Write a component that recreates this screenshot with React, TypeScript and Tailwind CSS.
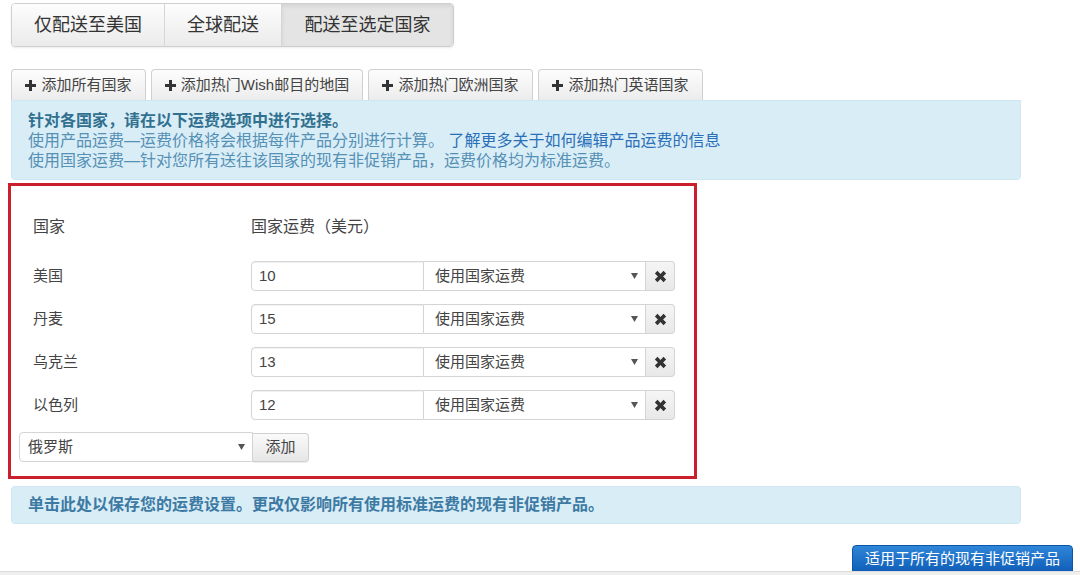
import React from 'react';

const font = { fontFamily: '"Liberation Sans", "Noto Sans CJK SC", sans-serif' };

function PlusIcon() {
  return (
    <svg width="11" height="11" viewBox="0 0 11 11" className="shrink-0">
      <path d="M4 0h3v4h4v3H7v4H4V7H0V4h4z" fill="#333" />
    </svg>
  );
}

function CrossIcon() {
  return (
    <svg width="13" height="13" viewBox="0 0 12 12">
      <path
        d="M0.8 3.2 3.2 0.8 6 3.6l2.8-2.8 2.4 2.4L8.4 6l2.8 2.8-2.4 2.4L6 8.4l-2.8 2.8-2.4-2.4L3.6 6z"
        fill="#333"
      />
    </svg>
  );
}

function Caret() {
  return (
    <svg width="7" height="6" viewBox="0 0 7 6">
      <path d="M0 0h7L3.5 6z" fill="#555" />
    </svg>
  );
}

const tabs = [
  { label: '仅配送至美国', w: 'w-[152px]', active: false },
  { label: '全球配送', w: 'w-[117px]', active: false },
  { label: '配送至选定国家', w: 'w-[172px]', active: true },
];

const addButtons = [
  { label: '添加所有国家', w: 'w-[135px]' },
  { label: '添加热门Wish邮目的地国', w: 'w-[212px]' },
  { label: '添加热门欧洲国家', w: 'w-[165px]' },
  { label: '添加热门英语国家', w: 'w-[165px]' },
];

const rows = [
  { country: '美国', price: '10' },
  { country: '丹麦', price: '15' },
  { country: '乌克兰', price: '13' },
  { country: '以色列', price: '12' },
];

export default function App() {
  return (
    <div style={font} className="relative h-[575px] w-full overflow-hidden bg-white text-[#333]">
      <div className="pl-[11px]">
        {/* shipping mode tabs */}
        <div className="mt-[3px] flex h-[44px] w-fit overflow-hidden rounded-[4px] border border-[#cfcfcf] shadow-[0_1px_2px_rgba(0,0,0,0.08)]">
          {tabs.map((t, i) => (
            <div
              key={t.label}
              className={`${t.w} flex items-center justify-center text-[18px] ${
                i > 0 ? 'border-l border-[#d6d6d6]' : ''
              } ${
                t.active
                  ? 'bg-[#e4e4e4] shadow-[inset_0_2px_4px_rgba(0,0,0,0.08)]'
                  : 'bg-gradient-to-b from-[#fdfdfd] to-[#ebebeb]'
              }`}
            >
              {t.label}
            </div>
          ))}
        </div>

        {/* add country buttons */}
        <div className="mt-[22px] flex h-[31px] gap-[5px]">
          {addButtons.map((b) => (
            <div
              key={b.label}
              className={`${b.w} flex items-center justify-center gap-[5px] rounded-t-[4px] border border-b-0 border-[#d0d0d0] bg-gradient-to-b from-[#fdfdfd] to-[#ececec] text-[15px] text-[#444]`}
            >
              <PlusIcon />
              <span>{b.label}</span>
            </div>
          ))}
        </div>

        {/* info box */}
        <div className="h-[80px] w-[1010px] rounded-b-[4px] border border-[#cfe6f3] bg-[#d9edf7] pl-[16px] pt-[10px] text-[16px] leading-[20px] text-[#5590b5]">
          <div className="font-bold text-[#31708f]">针对各国家，请在以下运费选项中进行选择。</div>
          <div>
            使用产品运费—运费价格将会根据每件产品分别进行计算。{' '}
            <span className="text-[#2a6fb8]">了解更多关于如何编辑产品运费的信息</span>
          </div>
          <div>使用国家运费—针对您所有送往该国家的现有非促销产品，运费价格均为标准运费。</div>
        </div>

        {/* country table */}
        <div className="-ml-[3px] mt-[3px] h-[296px] w-[689px] border-[3px] border-[#cc1f2d] bg-white px-[8px] pt-[29px] text-[#444]">
          <div className="flex h-[24px] items-center text-[16px]">
            <div className="w-[232px] pl-[14px]">国家</div>
            <div>国家运费（美元）</div>
          </div>
          <div className="mt-[22px] flex flex-col gap-[13px]">
            {rows.map((r) => (
              <div key={r.country} className="flex h-[30px] items-center text-[15px]">
                <div className="w-[232px] pl-[14px]">{r.country}</div>
                <div className="flex h-[30px] w-[173px] items-center rounded-l-[4px] border border-[#d4d4d4] pl-[7px] shadow-[inset_0_1px_1px_rgba(0,0,0,0.06)]">
                  {r.price}
                </div>
                <div className="flex h-[30px] w-[222px] items-center justify-between border-y border-r border-[#d4d4d4] pl-[11px] pr-[7px]">
                  <span>使用国家运费</span>
                  <Caret />
                </div>
                <div className="flex h-[30px] w-[29px] items-center justify-center rounded-r-[4px] border-y border-r border-[#d4d4d4] bg-gradient-to-b from-[#f5f5f5] to-[#e8e8e8]">
                  <CrossIcon />
                </div>
              </div>
            ))}
          </div>
          <div className="mt-[12px] flex h-[30px] items-center text-[15px]">
            <div className="flex h-[30px] w-[234px] items-center justify-between rounded-l-[4px] border border-[#d4d4d4] pl-[8px] pr-[7px]">
              <span>俄罗斯</span>
              <Caret />
            </div>
            <div className="flex h-[29px] w-[56px] items-center justify-center rounded-r-[4px] border-y border-r border-[#d0d0d0] bg-gradient-to-b from-[#fafafa] to-[#e6e6e6] shadow-[0_1px_1px_rgba(0,0,0,0.08)]">
              添加
            </div>
          </div>
        </div>

        {/* save notice */}
        <div className="mt-[7px] flex h-[38px] w-[1010px] items-center rounded-[4px] border border-[#cfe6f3] bg-[#d9edf7] pl-[16px] text-[16px] font-bold text-[#3d7aa3]">
          单击此处以保存您的运费设置。更改仅影响所有使用标准运费的现有非促销产品。
        </div>

        <div className="mt-[21px] flex w-[1062px] justify-end">
          <div className="flex h-[29px] w-[221px] items-center justify-center rounded-t-[4px] border border-[#0c56a8] bg-gradient-to-b from-[#2f86d8] to-[#0d5cb6] text-[15px] text-white">
            适用于所有的现有非促销产品
          </div>
        </div>
      </div>
      <div className="absolute bottom-0 left-0 h-[4px] w-full border-t border-[#dcdcdc] bg-[#efefef]" />
    </div>
  );
}
